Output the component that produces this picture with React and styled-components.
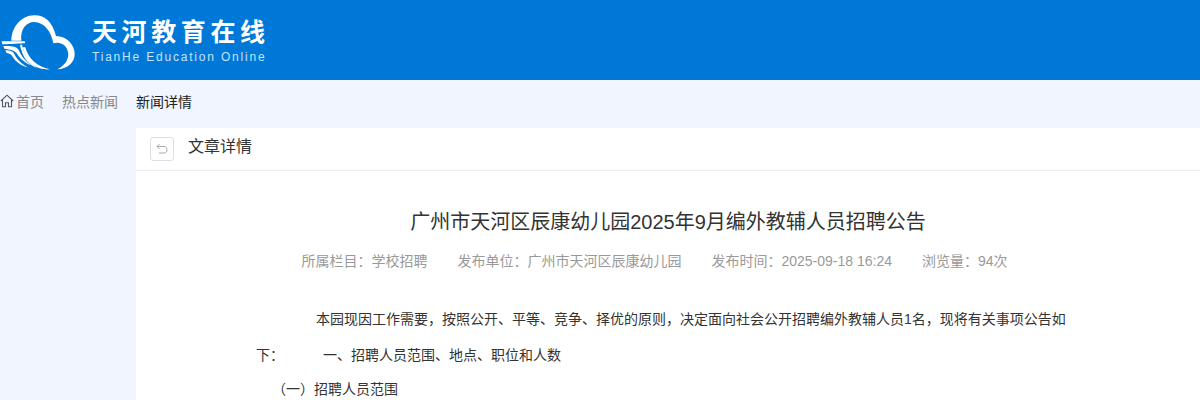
import styled, { createGlobalStyle } from 'styled-components';

const GlobalStyle = createGlobalStyle`
  html, body {
    margin: 0;
    padding: 0;
    background: #f0f5ff;
    font-family: 'Liberation Sans', 'Noto Sans CJK SC', sans-serif;
  }
`;

const Page = styled.div`
  height: 400px;
  overflow: hidden;
`;

const Header = styled.header`
  height: 80px;
  background: #0078d7;
  display: flex;
  align-items: center;
`;

const Brand = styled.div`
  display: flex;
  align-items: center;
  gap: 12px;
`;

const BrandText = styled.div`
  color: #fff;
  display: flex;
  flex-direction: column;
  gap: 3px;
`;

const BrandName = styled.div`
  font-size: 25px;
  line-height: 30px;
  font-weight: 700;
  letter-spacing: 4.6px;
  white-space: nowrap;
`;

const BrandSub = styled.div`
  font-size: 12px;
  line-height: 14px;
  letter-spacing: 1.8px;
  color: #c4e3fa;
  white-space: nowrap;
`;

const Crumbs = styled.nav`
  height: 48px;
  padding-bottom: 6px;
  box-sizing: border-box;
  display: flex;
  align-items: center;
  font-size: 14px;
`;

const Crumb = styled.span`
  display: inline-flex;
  align-items: center;
  gap: 2px;
  margin-right: 18px;
  color: ${props => (props.$active ? '#222' : '#888')};
`;

const Panel = styled.main`
  margin-left: 136px;
  background: #fff;
`;

const PanelHead = styled.div`
  height: 42px;
  padding-left: 14px;
  display: flex;
  align-items: center;
  gap: 14px;
  border-bottom: 1px solid #ebeef2;
`;

const BackButton = styled.button`
  width: 24px;
  height: 24px;
  padding: 0;
  display: flex;
  align-items: center;
  justify-content: center;
  background: #fff;
  border: 1px solid #dcdfe6;
  border-radius: 3px;
`;

const PanelTitle = styled.div`
  font-size: 16px;
  line-height: 22px;
  color: #333;
  padding-bottom: 4px;
`;

const Article = styled.article`
  padding: 0 120px;
`;

const Title = styled.h1`
  margin: 36px 0 0;
  font-size: 20px;
  line-height: 30px;
  font-weight: 400;
  color: #333;
  text-align: center;
`;

const Meta = styled.div`
  margin-top: 14px;
  padding-right: 27px;
  display: flex;
  justify-content: center;
  gap: 30px;
  font-size: 14px;
  line-height: 20px;
  color: #999;
`;

const Body = styled.div`
  margin-top: 30px;
  font-size: 14px;
  line-height: 36px;
  color: #333;
`;

const Para = styled.p`
  margin: ${props => props.$top || 0}px 0 0;
  text-indent: ${props => props.$indent || 0}px;
`;

// viewBox is the logo at 3x, easier to read the curves off the zoomed crop
const Logo = () => (
  <svg width="80" height="64" viewBox="0 0 240 192" fill="#fff">
    <path d="M34 98C34 62 60 22 104 22C136 22 158 44 168 84C200 84 224 110 224 138C224 165 200 183 172 184C196 172 208 152 204 132C200 112 182 100 160 106C154 70 132 42 102 42C78 42 60 66 64 98Z" />
    <path d="M76 118C84 150 110 176 150 184C112 186 82 170 68 118Z" />
    <path d="M5 100H74L76 106C62 107 30 108 7 109Z" />
    <path d="M10 114C30 113 50 114 56 126C62 140 74 158 92 172C74 164 58 150 50 136C46 128 30 124 13 122Z" />
    <path d="M16 127C30 127 40 130 44 140C50 152 62 166 84 178C64 174 46 160 38 146C34 138 26 135 19 134Z" />
    <path d="M60 110H66C72 135 86 164 112 180C86 172 66 146 60 110Z" />
  </svg>
);

const HomeIcon = () => (
  <svg width="14" height="14" viewBox="0 0 14 14" fill="none" stroke="#555" strokeWidth="1.1">
    <path d="M0.800 7L7 1.200L13.200 7M2.500 5.800V12.800H5.500V8.800H8.500V12.800H11.500V5.800" />
  </svg>
);

const BackIcon = () => (
  <svg width="14" height="14" viewBox="0 0 14 14" fill="none" stroke="#aaa" strokeWidth="1">
    <path d="M4.500 2L2 4.500L4.500 7M2 4.500H9C11 4.500 12 6 12 7.800C12 9.600 11 11 9 11H4" />
  </svg>
);

const App = () => (
  <Page>
    <GlobalStyle />
    <Header>
      <Brand>
        <Logo />
        <BrandText>
          <BrandName>天河教育在线</BrandName>
          <BrandSub>TianHe Education Online</BrandSub>
        </BrandText>
      </Brand>
    </Header>
    <Crumbs>
      <Crumb><HomeIcon />首页</Crumb>
      <Crumb>热点新闻</Crumb>
      <Crumb $active>新闻详情</Crumb>
    </Crumbs>
    <Panel>
      <PanelHead>
        <BackButton aria-label="返回"><BackIcon /></BackButton>
        <PanelTitle>文章详情</PanelTitle>
      </PanelHead>
      <Article>
        <Title>广州市天河区辰康幼儿园2025年9月编外教辅人员招聘公告</Title>
        <Meta>
          <span>所属栏目：学校招聘</span>
          <span>发布单位：广州市天河区辰康幼儿园</span>
          <span>发布时间：2025-09-18 16:24</span>
          <span>浏览量：94次</span>
        </Meta>
        <Body>
          <Para $indent={60}>
            {'本园现因工作需要，按照公开、平等、竞争、择优的原则，决定面向社会公开招聘编外教辅人员1名，现将有关事项公告如下：' +
              '\u00a0'.repeat(10) +
              '一、招聘人员范围、地点、职位和人数'}
          </Para>
          <Para $indent={16} $top={-2}>（一）招聘人员范围</Para>
        </Body>
      </Article>
    </Panel>
  </Page>
);

export default App;
